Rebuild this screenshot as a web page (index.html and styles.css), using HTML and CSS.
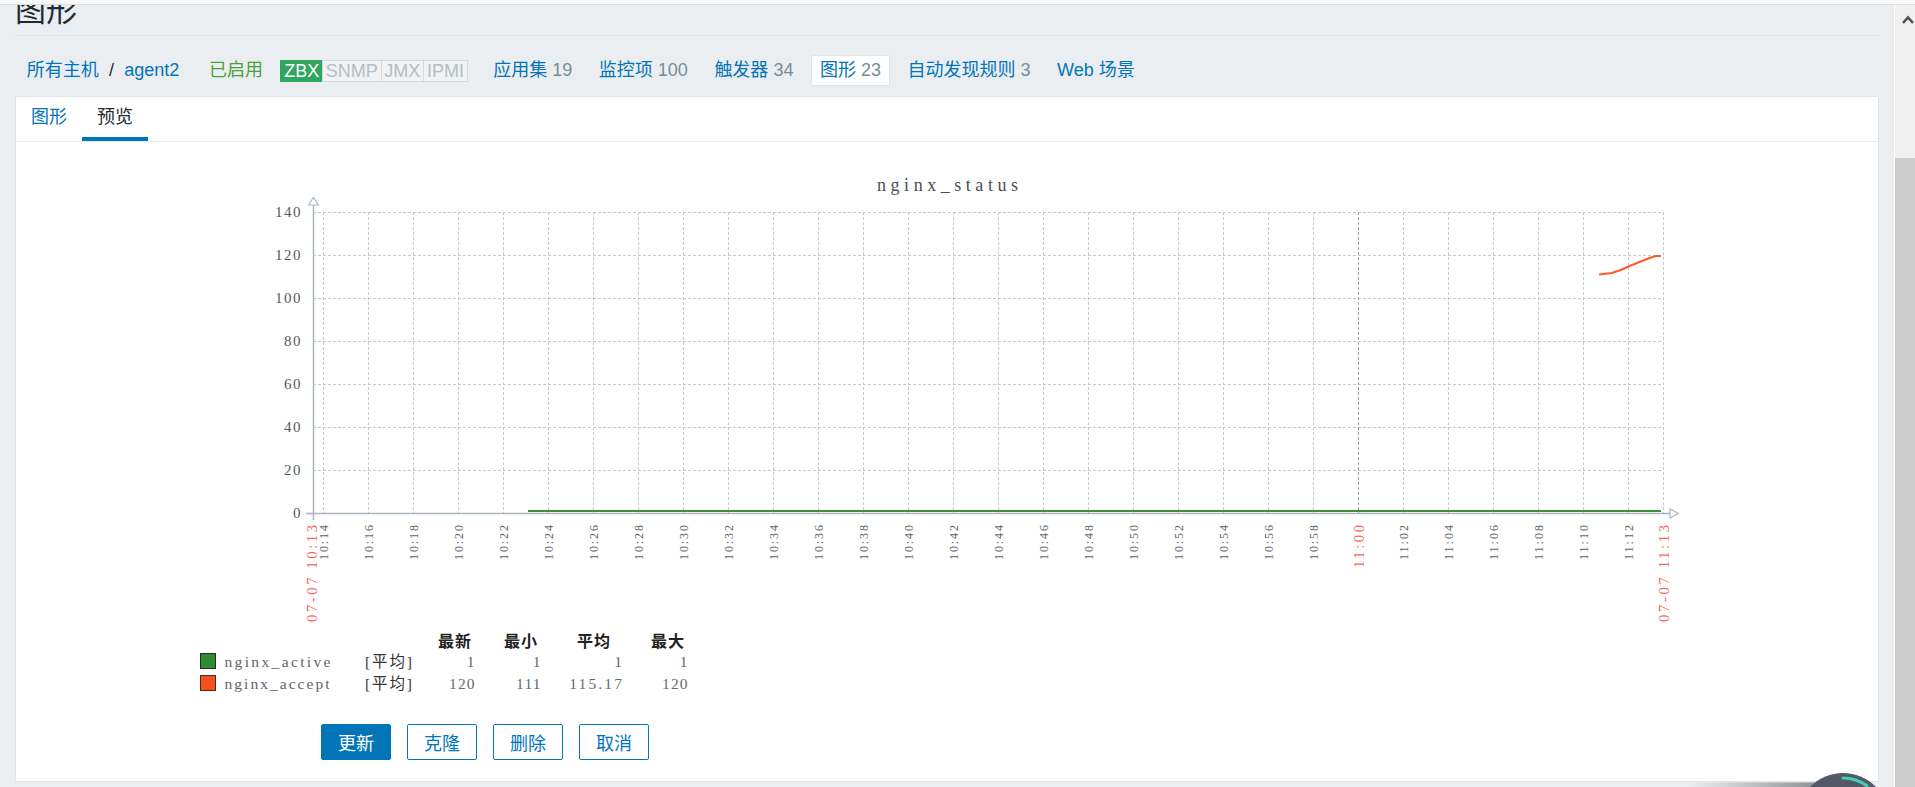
FILE: index.html
```html
<!DOCTYPE html>
<html lang="zh-CN">
<head>
<meta charset="utf-8">
<title>图形</title>
<link rel="stylesheet" href="styles.css">
</head>
<body>
<div class="topstrip"></div>
<div class="layout">
  <main class="page">
    <header class="header"><h1>图形</h1></header>
    <nav class="hostnav">
      <a class="link" href="#">所有主机</a>
      <span class="sep">/</span>
      <a class="link" href="#">agent2</a>
      <span class="enabled">已启用</span>
      <span class="status">
        <span class="st st-on">ZBX</span><span class="st">SNMP</span><span class="st">JMX</span><span class="st">IPMI</span>
      </span>
      <ul class="hosttabs">
        <li><a class="link" href="#">应用集</a> <span class="count">19</span></li>
        <li><a class="link" href="#">监控项</a> <span class="count">100</span></li>
        <li><a class="link" href="#">触发器</a> <span class="count">34</span></li>
        <li class="selected"><a class="link" href="#">图形</a> <span class="count">23</span></li>
        <li><a class="link" href="#">自动发现规则</a> <span class="count">3</span></li>
        <li><a class="link" href="#">Web 场景</a></li>
      </ul>
    </nav>
    <section class="card">
      <ul class="tabs">
        <li><a class="link" href="#">图形</a></li>
        <li class="active">预览</li>
      </ul>
      <div class="preview">
        <svg class="chart" width="1862" height="563" viewBox="16 142 1862 563" xmlns="http://www.w3.org/2000/svg">
          <text x="877" y="191" class="c-title" textLength="141" lengthAdjust="spacing">nginx_status</text>

          <path class="grid" d="M313 212.5H1663 M313 255.5H1663 M313 298.5H1663 M313 341.5H1663 M313 384.5H1663 M313 427.5H1663 M313 470.5H1663"/>
          <path class="grid" d="M323.5 212V513 M368.5 212V513 M413.5 212V513 M458.5 212V513 M503.5 212V513 M548.5 212V513 M593.5 212V513 M638.5 212V513 M683.5 212V513 M728.5 212V513 M773.5 212V513 M818.5 212V513 M863.5 212V513 M908.5 212V513 M953.5 212V513 M998.5 212V513 M1043.5 212V513 M1088.5 212V513 M1133.5 212V513 M1178.5 212V513 M1223.5 212V513 M1268.5 212V513 M1313.5 212V513 M1403.5 212V513 M1448.5 212V513 M1493.5 212V513 M1538.5 212V513 M1583.5 212V513 M1628.5 212V513 M1663.5 212V513"/>
          <path class="grid-main" d="M1358.5 212V513"/>

          <path class="axis" d="M313.5 204V520 M306 513.5H1670"/>
          <polygon class="arrow" points="308.5,205 313.5,197.5 318.5,205"/>
          <polygon class="arrow" points="1670,509 1678.5,513.5 1670,518"/>

          <g class="ylab">
            <text x="302" y="217">140</text>
            <text x="302" y="260">120</text>
            <text x="302" y="303">100</text>
            <text x="302" y="346">80</text>
            <text x="302" y="389">60</text>
            <text x="302" y="432">40</text>
            <text x="302" y="475">20</text>
            <text x="302" y="518">0</text>
          </g>

          <g class="xlab">
            <text transform="translate(327.5 525) rotate(-90)" textLength="35" lengthAdjust="spacing">10:14</text>
            <text transform="translate(372.5 525) rotate(-90)" textLength="35" lengthAdjust="spacing">10:16</text>
            <text transform="translate(417.5 525) rotate(-90)" textLength="35" lengthAdjust="spacing">10:18</text>
            <text transform="translate(462.5 525) rotate(-90)" textLength="35" lengthAdjust="spacing">10:20</text>
            <text transform="translate(507.5 525) rotate(-90)" textLength="35" lengthAdjust="spacing">10:22</text>
            <text transform="translate(552.5 525) rotate(-90)" textLength="35" lengthAdjust="spacing">10:24</text>
            <text transform="translate(597.5 525) rotate(-90)" textLength="35" lengthAdjust="spacing">10:26</text>
            <text transform="translate(642.5 525) rotate(-90)" textLength="35" lengthAdjust="spacing">10:28</text>
            <text transform="translate(687.5 525) rotate(-90)" textLength="35" lengthAdjust="spacing">10:30</text>
            <text transform="translate(732.5 525) rotate(-90)" textLength="35" lengthAdjust="spacing">10:32</text>
            <text transform="translate(777.5 525) rotate(-90)" textLength="35" lengthAdjust="spacing">10:34</text>
            <text transform="translate(822.5 525) rotate(-90)" textLength="35" lengthAdjust="spacing">10:36</text>
            <text transform="translate(867.5 525) rotate(-90)" textLength="35" lengthAdjust="spacing">10:38</text>
            <text transform="translate(912.5 525) rotate(-90)" textLength="35" lengthAdjust="spacing">10:40</text>
            <text transform="translate(957.5 525) rotate(-90)" textLength="35" lengthAdjust="spacing">10:42</text>
            <text transform="translate(1002.5 525) rotate(-90)" textLength="35" lengthAdjust="spacing">10:44</text>
            <text transform="translate(1047.5 525) rotate(-90)" textLength="35" lengthAdjust="spacing">10:46</text>
            <text transform="translate(1092.5 525) rotate(-90)" textLength="35" lengthAdjust="spacing">10:48</text>
            <text transform="translate(1137.5 525) rotate(-90)" textLength="35" lengthAdjust="spacing">10:50</text>
            <text transform="translate(1182.5 525) rotate(-90)" textLength="35" lengthAdjust="spacing">10:52</text>
            <text transform="translate(1227.5 525) rotate(-90)" textLength="35" lengthAdjust="spacing">10:54</text>
            <text transform="translate(1272.5 525) rotate(-90)" textLength="35" lengthAdjust="spacing">10:56</text>
            <text transform="translate(1317.5 525) rotate(-90)" textLength="35" lengthAdjust="spacing">10:58</text>
            <text transform="translate(1407.5 525) rotate(-90)" textLength="35" lengthAdjust="spacing">11:02</text>
            <text transform="translate(1452.5 525) rotate(-90)" textLength="35" lengthAdjust="spacing">11:04</text>
            <text transform="translate(1497.5 525) rotate(-90)" textLength="35" lengthAdjust="spacing">11:06</text>
            <text transform="translate(1542.5 525) rotate(-90)" textLength="35" lengthAdjust="spacing">11:08</text>
            <text transform="translate(1587.5 525) rotate(-90)" textLength="35" lengthAdjust="spacing">11:10</text>
            <text transform="translate(1632.5 525) rotate(-90)" textLength="35" lengthAdjust="spacing">11:12</text>
          </g>
          <g class="xlab-red">
            <text transform="translate(316.5 525) rotate(-90)" textLength="97" lengthAdjust="spacing">07-07 10:13</text>
            <text transform="translate(1363.5 525) rotate(-90)" textLength="43" lengthAdjust="spacing">11:00</text>
            <text transform="translate(1669 525) rotate(-90)" textLength="97" lengthAdjust="spacing">07-07 11:13</text>
          </g>

          <path class="line-green" d="M528 511H1661"/>
          <polyline class="line-red" points="1599,274.5 1612,273 1622,269.5 1632,265 1642,261 1651,257.5 1656,256 1661,256"/>

          <g class="lg-head">
            <text x="472" y="647">最新</text>
            <text x="538" y="647">最小</text>
            <text x="611" y="647">平均</text>
            <text x="685" y="647">最大</text>
          </g>
          <rect class="sw-green" x="200.5" y="653.5" width="15" height="15"/>
          <rect class="sw-red" x="200.5" y="675.5" width="15" height="15"/>
          <g class="lg-name">
            <text x="224.5" y="667" textLength="106" lengthAdjust="spacing">nginx_active</text>
            <text x="224.5" y="689" textLength="105" lengthAdjust="spacing">nginx_accept</text>
          </g>
          <g class="lg-fn">
            <text x="365" y="667" textLength="47" lengthAdjust="spacing">[平均]</text>
            <text x="365" y="689" textLength="47" lengthAdjust="spacing">[平均]</text>
          </g>
          <g class="lg-val">
            <text x="474.5" y="667">1</text>
            <text x="540.5" y="667">1</text>
            <text x="622" y="667">1</text>
            <text x="687.5" y="667">1</text>
            <text x="474.5" y="689" textLength="25.5" lengthAdjust="spacing">120</text>
            <text x="540.5" y="689" textLength="24.5" lengthAdjust="spacing">111</text>
            <text x="622" y="689" textLength="52.8" lengthAdjust="spacing">115.17</text>
            <text x="687.5" y="689" textLength="25.5" lengthAdjust="spacing">120</text>
          </g>
        </svg>
        <div class="buttons">
          <button class="btn btn-primary" type="button">更新</button>
          <button class="btn" type="button">克隆</button>
          <button class="btn" type="button">删除</button>
          <button class="btn" type="button">取消</button>
        </div>
      </div>
    </section>
  </main>
  <aside class="scrollbar">
    <div class="sb-up">
      <svg width="12" height="9" viewBox="0 0 12 9"><polyline points="1,8 6,2.5 11,8" fill="none" stroke="#505050" stroke-width="2.6"/></svg>
    </div>
    <div class="sb-thumb"></div>
  </aside>
</div>
<svg class="floater" width="230" height="27" viewBox="1680 760 230 27" xmlns="http://www.w3.org/2000/svg">
  <defs>
    <linearGradient id="band" x1="0" x2="1" y1="0" y2="0">
      <stop offset="0" stop-color="#6f757e" stop-opacity="0"/>
      <stop offset="1" stop-color="#6f757e" stop-opacity="0.75"/>
    </linearGradient>
  </defs>
  <rect x="1690" y="782.5" width="125" height="5" fill="url(#band)"/>
  <circle cx="1843" cy="819" r="46" fill="#535966"/>
  <path d="M1843 778 A41 41 0 0 1 1867 785.8" fill="none" stroke="#3fd1b6" stroke-width="3" stroke-linecap="round"/>
</svg>
</body>
</html>
```

FILE: styles.css
```css
* { box-sizing: border-box; }
html, body { margin: 0; padding: 0; }
body {
  width: 1915px;
  height: 787px;
  overflow: hidden;
  position: relative;
  background: #ebeef0;
  color: #1f2c33;
  font-family: "Liberation Sans", Arial, "Noto Sans CJK SC", sans-serif;
  font-size: 18px;
}
a { text-decoration: none; }
.link { color: #0275b8; }

.topstrip {
  height: 5px;
  background: #f8f8f8;
  border-bottom: 1px solid #dcdfe2;
}
.layout { display: flex; height: 782px; }
.page { flex: 1; min-width: 0; padding: 0 15px; }

.header {
  height: 31px;
  border-bottom: 1px solid #dde2e5;
  overflow: hidden;
}
.header h1 {
  margin: -9px 0 0;
  font-family: "Noto Sans CJK SC", sans-serif;
  font-size: 31px;
  line-height: 24px;
  font-weight: normal;
  color: #1f2c33;
}

.hostnav {
  display: flex;
  align-items: center;
  height: 60px;
  padding: 19px 0 10px 11.7px;
  line-height: 29px;
  white-space: nowrap;
}
.sep { margin: 0 10.3px; color: #1f2c33; }
.enabled { margin-left: 29.7px; color: #4ba03c; }
.status { display: flex; margin-left: 17.3px; }
.st {
  border: 1px solid #d3d9dd;
  background: #f0f2f4;
  color: #b4bec4;
  padding: 0 2.8px;
  line-height: 20px;
  margin-left: -1px;
}
.st:first-child { margin-left: 0; }
.st-on { background: #30a65e; border-color: #30a65e; color: #fff; }

.hosttabs {
  display: flex;
  gap: 8.5px;
  list-style: none;
  margin: 0 0 0 16.5px;
  padding: 0;
}
.hosttabs li {
  padding: 0 8px;
  border: 1px solid transparent;
  border-radius: 2px;
}
.hosttabs li.selected { background: #fff; border-color: #dfe4e7; }
.count { color: #768d99; }

.card {
  background: #fff;
  border: 1px solid #dfe4e7;
  height: 686px;
}
.tabs {
  display: flex;
  list-style: none;
  margin: 0;
  padding: 0;
  border-bottom: 1px solid #e8ebee;
}
.tabs li {
  height: 44px;
  padding: 0 15px;
  line-height: 41px;
  border-bottom: 4px solid transparent;
}
.tabs li.active { border-bottom-color: #0275b8; color: #1f2c33; }

.chart { display: block; }
.c-title { font-family: "Liberation Serif", serif; font-size: 18px; fill: #4a4f53; }
.grid { fill: none; stroke: #c2cad0; stroke-width: 1; stroke-dasharray: 3 2; }
.grid-main { fill: none; stroke: #98a2a9; stroke-width: 1; stroke-dasharray: 3 2; }
.axis { fill: none; stroke: #a9b6be; stroke-width: 1.5; }
.arrow { fill: #fff; stroke: #a9b6be; stroke-width: 1.2; }
.ylab { font-family: "Liberation Serif", serif; font-size: 15px; letter-spacing: 1.5px; fill: #555a5e; text-anchor: end; }
.xlab { font-family: "Liberation Serif", serif; font-size: 12px; fill: #5f6468; text-anchor: end; }
.xlab-red { font-family: "Liberation Serif", serif; font-size: 14.5px; fill: #f46565; text-anchor: end; }
.line-green { fill: none; stroke: #3d8f3d; stroke-width: 2; }
.line-red { fill: none; stroke: #ff5a28; stroke-width: 2; stroke-linejoin: round; }
.lg-head { font-family: "Noto Sans CJK SC", sans-serif; font-size: 16px; font-weight: bold; letter-spacing: 1px; fill: #222; text-anchor: end; }
.sw-green { fill: #2e8b2e; stroke: #2a2a2a; stroke-width: 1; }
.sw-red { fill: #f4511e; stroke: #4a2a22; stroke-width: 1; }
.lg-name { font-family: "Liberation Serif", serif; font-size: 15.5px; fill: #5f6569; }
.lg-fn { font-family: "Liberation Serif", "Noto Sans CJK SC", serif; font-size: 15.5px; fill: #333; }
.lg-val { font-family: "Liberation Serif", serif; font-size: 15.5px; fill: #666b6f; text-anchor: end; }

.buttons {
  display: flex;
  gap: 16px;
  margin-top: 19px;
  padding-left: 305px;
}
.btn {
  height: 36px;
  padding: 0 16px;
  border: 1px solid #0275b8;
  border-radius: 2px;
  background: #fff;
  color: #0275b8;
  font-family: "Noto Sans CJK SC", sans-serif;
  font-size: 18px;
  line-height: 34px;
}
.btn-primary { background: #0275b8; color: #fff; }

.scrollbar {
  width: 21px;
  border-left: 1px solid #fff;
  background: #f0f0f0;
  display: flex;
  flex-direction: column;
}
.sb-up { height: 153px; padding: 10px 0 0 6.5px; }
.sb-up svg { display: block; }
.sb-thumb { flex: 1; background: #cdcdcd; }

.floater {
  position: absolute;
  left: 1680px;
  top: 760px;
}
```
